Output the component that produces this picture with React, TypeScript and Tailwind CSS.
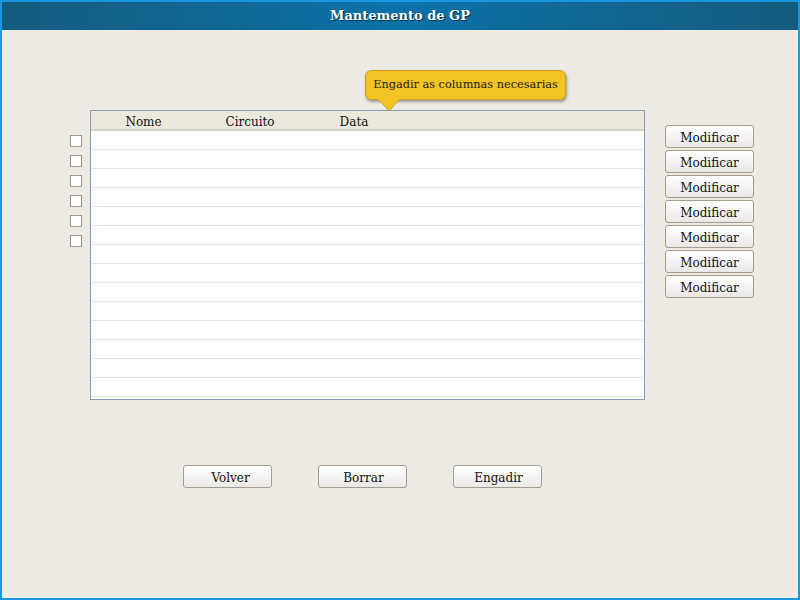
import React from "react";

const font = { fontFamily: '"DejaVu Serif", serif' };

function Btn({ label, extra = "" }: { label: string; extra?: string }) {
  return (
    <button
      className={`w-[89px] h-[23px] rounded-[3px] border border-[#a69c8e] bg-gradient-to-b from-[#ffffff] to-[#e9e8e6] text-[12px] text-[#111] leading-none flex items-center justify-center pt-[2px] ${extra}`}
      style={font}
    >
      {label}
    </button>
  );
}

export default function App() {
  const rows = Array.from({ length: 14 });
  return (
    <div className="w-[800px] h-[600px] border-2 border-[#1a98df] bg-[#edeae3] flex flex-col overflow-hidden" style={font}>
      <div className="h-[28px] shrink-0 bg-gradient-to-r from-[#135b7d] via-[#0b72aa] to-[#135b7d] flex items-center justify-center">
        <span className="text-white font-bold text-[13px] [text-shadow:1px_1px_1px_rgba(0,0,0,0.6)]">Mantemento de GP</span>
      </div>
      <div className="relative flex-1 flex flex-col">
        <div className="absolute left-[363px] top-[40px] z-10">
          <div className="relative w-[201px] h-[30px] rounded-[6px] border border-[#c9a12a] bg-[#f2c322] shadow-[1px_2px_3px_rgba(0,0,0,0.35)] flex items-center justify-center text-[11.3px] text-[#222] whitespace-nowrap">
            Engadir as columnas necesarias
          </div>
          <svg className="absolute left-[12px] top-[29px]" width="24" height="14" viewBox="0 0 24 14">
            <polygon points="1,0 23,0 12,12" fill="#f2c322" />
            <polyline points="1,0 12,12 23,0" fill="none" stroke="#c9a12a" strokeWidth="1" />
            <rect x="2" y="0" width="20" height="1.5" fill="#f2c322" />
          </svg>
        </div>

        <div className="flex items-start pl-[68px] mt-[80px]">
          <div className="flex flex-col gap-[8px] mt-[25px] w-[12px]">
            {Array.from({ length: 6 }).map((_, i) => (
              <div key={i} className="w-[12px] h-[12px] border border-[#a59b8d] bg-white" />
            ))}
          </div>
          <div className="ml-[8px] w-[555px] h-[290px] border border-[#7f9dbf] bg-white overflow-hidden flex flex-col">
            <div className="h-[20px] shrink-0 bg-[#ebe9dc] border-b-2 border-[#d6d3c4] flex items-center pt-[3px] text-[12px] text-[#111]">
              <div className="w-[105px] text-center">Nome</div>
              <div className="w-[108px] text-center">Circuito</div>
              <div className="w-[100px] text-center">Data</div>
            </div>
            {rows.map((_, i) => (
              <div key={i} className="h-[19px] shrink-0 border-b border-[#e3e3e3]" />
            ))}
          </div>
          <div className="ml-[20px] mt-[15px] flex flex-col gap-[2px]">
            {Array.from({ length: 7 }).map((_, i) => (
              <Btn key={i} label="Modificar" />
            ))}
          </div>
        </div>

        <div className="flex pl-[181px] gap-[46px] mt-[65px]">
          <Btn label="Volver" extra="pl-[6px]" />
          <Btn label="Borrar" extra="pl-[2px]" />
          <Btn label="Engadir" extra="pl-[2px]" />
        </div>
      </div>
    </div>
  );
}
